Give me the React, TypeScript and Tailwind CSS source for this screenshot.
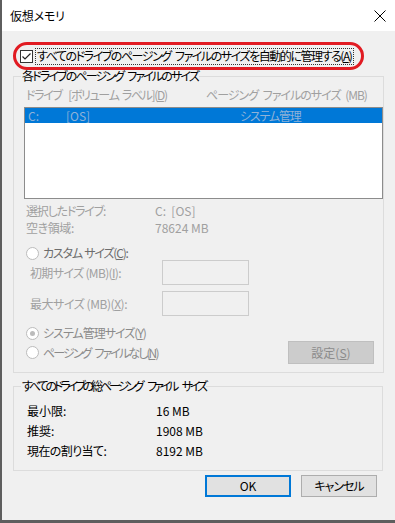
import React from "react";

const font = "font-['Noto_Sans_CJK_JP',sans-serif] [font-feature-settings:'palt']";

function Radio({ checked }: { checked?: boolean }) {
  return (
    <span className="w-[13px] h-[13px] rounded-full border border-[#bcbcbc] bg-white flex items-center justify-center shrink-0">
      {checked && <span className="w-[5px] h-[5px] rounded-full bg-[#bcbcbc]" />}
    </span>
  );
}

export default function App() {
  return (
    <div className={`w-[395px] h-[523px] bg-[#f0f0f0] border-l-2 border-b-[3px] border-[#5e5e5e] text-[12px] leading-[16px] text-black flex flex-col ${font}`}>
      {/* title bar */}
      <div className="h-[31px] bg-white flex items-center justify-between pl-[8px] pr-[8px] shrink-0">
        <span className="text-[12px] tracking-[-0.2px]">仮想メモリ</span>
        <svg width="12" height="12" viewBox="0 0 12 12" className="mr-[1px]">
          <path d="M0.5 0.5 L11.5 11.5 M11.5 0.5 L0.5 11.5" stroke="#000" strokeWidth="1" />
        </svg>
      </div>

      {/* highlighted checkbox */}
      <div className="mt-[11px] ml-[11px] w-[351px] h-[28px] border-[3px] border-[#e11b22] rounded-[14px] flex items-center pl-[4px] shrink-0">
        <span className="w-[13px] h-[13px] border border-[#333] bg-white flex items-center justify-center shrink-0">
          <svg width="11" height="11" viewBox="0 0 11 11">
            <path d="M1.5 5.5 L4 8 L9.5 2.5" stroke="#222" strokeWidth="1.2" fill="none" />
          </svg>
        </span>
        <span className="ml-[2px] h-[17px] border border-dotted border-[#333] flex items-center pl-[1px] pr-[2px] whitespace-nowrap tracking-[-1.45px] [word-spacing:3px]">
          すべてのドライブのページング ファイルのサイズを自動的に管理する(<span className="underline">A</span>)
        </span>
      </div>

      {/* group 1 */}
      <fieldset className="-mt-[1px] ml-[11px] w-[370px] border border-[#dcdcdc] pb-[8px] shrink-0">
        <legend className="ml-[7px] px-[1px] leading-[14px] tracking-[-1.85px] [word-spacing:3px]">各ドライブのページング ファイルのサイズ</legend>
        <div className="mt-[4px] h-[16px] flex text-[#a0a0a0] whitespace-nowrap">
          <span className="ml-[12px] w-[180px] tracking-[-1.35px] [word-spacing:2px]">ドライブ&nbsp; [ボリューム ラベル](<span className="underline">D</span>)</span>
          <span className="tracking-[-1px] [word-spacing:3px]">ページング ファイルのサイズ (MB)</span>
        </div>
        <div className="mt-[4px] ml-[10px] w-[359px] h-[92px] border border-[#8c8c8c] bg-white">
          <div className="h-[15px] bg-[#0078d7] flex items-center text-[#8fb2d8] leading-[15px]">
            <span className="ml-[3px] w-[38px]">C:</span>
            <span className="w-[174px]">[OS]</span>
            <span className="tracking-[-1.2px]">システム管理</span>
          </div>
        </div>
        <div className="mt-[4px] h-[16px] flex text-[#a0a0a0]">
          <span className="ml-[12px] w-[129px] tracking-[-1.2px]">選択したドライブ:</span>
          <span>C:&nbsp; [OS]</span>
        </div>
        <div className="mt-[1px] h-[16px] flex text-[#a0a0a0]">
          <span className="ml-[12px] w-[129px] tracking-[-0.4px]">空き領域:</span>
          <span>78624 MB</span>
        </div>
        <div className="mt-[10px] h-[14px] flex items-center">
          <span className="ml-[12px]"><Radio /></span>
          <span className="ml-[4px] text-[#6d6d6d] tracking-[-1.2px] [word-spacing:1px]">カスタム サイズ(<span className="underline">C</span>):</span>
        </div>
        <div className="h-[25px] flex items-center text-[#a0a0a0]">
          <span className="ml-[16px] w-[132px] tracking-[-0.65px]">初期サイズ (MB)(<span className="underline">I</span>):</span>
          <span className="w-[87px] h-[25px] border border-[#cccccc] bg-[#f0f0f0]" />
        </div>
        <div className="mt-[6px] h-[25px] flex items-center text-[#a0a0a0]">
          <span className="ml-[16px] w-[132px] tracking-[-0.45px]">最大サイズ (MB)(<span className="underline">X</span>):</span>
          <span className="w-[87px] h-[25px] border border-[#cccccc] bg-[#f0f0f0]" />
        </div>
        <div className="mt-[9px] h-[16px] flex items-center text-[#8a8a8a]">
          <span className="ml-[12px]"><Radio checked /></span>
          <span className="ml-[4px] tracking-[-1px]">システム管理サイズ(<span className="underline">Y</span>)</span>
        </div>
        <div className="h-[23px] flex items-center text-[#8a8a8a]">
          <span className="ml-[12px]"><Radio /></span>
          <span className="ml-[4px] w-[245px] tracking-[-1.9px] [word-spacing:3px]">ページング ファイルなし(<span className="underline">N</span>)</span>
          <span className="w-[86px] h-[23px] bg-[#cccccc] border border-[#bfbfbf] flex items-center justify-center text-[#8b8b8b]">
            設定(<span className="underline">S</span>)
          </span>
        </div>
      </fieldset>

      {/* group 2 */}
      <fieldset className="mt-[6px] ml-[11px] w-[370px] border border-[#dcdcdc] pb-[9px] shrink-0">
        <legend className="ml-[7px] px-[1px] leading-[14px] tracking-[-3.1px] [word-spacing:6px]">すべてのドライブの総ページング ファイル サイズ</legend>
        <div className="mt-[8px] h-[20px] flex items-center">
          <span className="ml-[13px] w-[129px]">最小限:</span>
          <span>16 MB</span>
        </div>
        <div className="h-[20px] flex items-center">
          <span className="ml-[13px] w-[129px]">推奨:</span>
          <span>1908 MB</span>
        </div>
        <div className="h-[20px] flex items-center">
          <span className="ml-[13px] w-[129px] tracking-[-0.6px]">現在の割り当て:</span>
          <span>8192 MB</span>
        </div>
      </fieldset>

      {/* buttons */}
      <div className="mt-[4px] flex justify-end pr-[18px] gap-[10px] shrink-0">
        <span className="w-[86px] h-[22px] bg-[#e1e1e1] border-2 border-[#0078d7] flex items-center justify-center">OK</span>
        <span className="w-[76px] h-[22px] bg-[#e1e1e1] border border-[#adadad] flex items-center justify-center tracking-[-1px]">キャンセル</span>
      </div>
    </div>
  );
}
